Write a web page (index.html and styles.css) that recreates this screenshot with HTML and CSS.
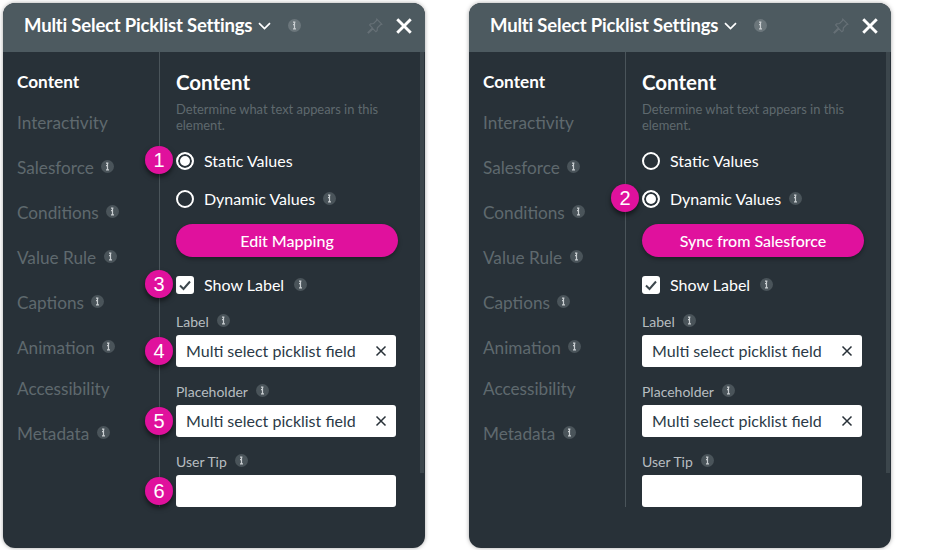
FILE: index.html
```html
<!DOCTYPE html>
<html lang="en">
<head>
<meta charset="utf-8">
<title>Multi Select Picklist Settings</title>
<link rel="stylesheet" href="styles.css">
</head>
<body>
<svg class="sprite" aria-hidden="true">
  <symbol id="i-info" viewBox="0 0 13 13"><circle cx="6.5" cy="6.5" r="6.5" fill="currentColor"/><path d="M5 3.2h2.4M6.5 3.2v6.4M5 9.8h3M5 5.6h1.5" fill="none" stroke="#c9ced1" stroke-width="1.2"/></symbol>
  <symbol id="i-x" viewBox="0 0 12 12"><path d="M1.5 1.5l9 9M10.5 1.5l-9 9" fill="none" stroke="currentColor"/></symbol>
  <symbol id="i-chev" viewBox="0 0 13 8"><path d="M1 1.2l5.5 5.3L12 1.2" fill="none" stroke="currentColor" stroke-width="1.7"/></symbol>
  <symbol id="i-pin" viewBox="0 0 16 16"><path d="M9.8 1.2l5 5-1.4.6-3 3-.3 3-1.2 1-2.9-2.9L1.6 15l-.6-.6L5.4 9.9 2.600 7l1-1.200 3-.3 3-3z" fill="none" stroke="currentColor" stroke-width="1.200"/></symbol>
</svg>
<main class="stage">

<section class="panel">
  <header class="head">
    <h1 class="title">Multi Select Picklist Settings</h1>
    <svg class="chev"><use href="#i-chev"/></svg>
    <svg class="info info-head"><use href="#i-info"/></svg>
    <svg class="pin"><use href="#i-pin"/></svg>
    <svg class="close"><use href="#i-x"/></svg>
  </header>
  <div class="body">
    <nav class="nav">
      <a class="nav-item active">Content</a>
      <a class="nav-item tight">Interactivity</a>
      <a class="nav-item">Salesforce<svg class="info"><use href="#i-info"/></svg></a>
      <a class="nav-item">Conditions<svg class="info"><use href="#i-info"/></svg></a>
      <a class="nav-item">Value Rule<svg class="info"><use href="#i-info"/></svg></a>
      <a class="nav-item">Captions<svg class="info"><use href="#i-info"/></svg></a>
      <a class="nav-item">Animation<svg class="info"><use href="#i-info"/></svg></a>
      <a class="nav-item tight">Accessibility</a>
      <a class="nav-item">Metadata<svg class="info"><use href="#i-info"/></svg></a>
    </nav>
    <div class="content">
      <h2 class="heading">Content</h2>
      <p class="desc">Determine what text appears in this element.</p>
      <div class="option first"><span class="badge">1</span><span class="radio on"></span>Static Values</div>
      <div class="option second"><span class="radio"></span>Dynamic Values<svg class="info"><use href="#i-info"/></svg></div>
      <button class="action">Edit Mapping</button>
      <div class="option check-row"><span class="badge">3</span><span class="check"><svg viewBox="0 0 18 18"><path d="M4 9.500l3.500 3.500L14 5.500" fill="none" stroke="#3d474d" stroke-width="2"/></svg></span>Show Label<svg class="info wide"><use href="#i-info"/></svg></div>
      <div class="label first-label">Label<svg class="info"><use href="#i-info"/></svg></div>
      <div class="field"><span class="badge">4</span>Multi select picklist field<svg class="clear"><use href="#i-x"/></svg></div>
      <div class="label">Placeholder<svg class="info"><use href="#i-info"/></svg></div>
      <div class="field"><span class="badge">5</span>Multi select picklist field<svg class="clear"><use href="#i-x"/></svg></div>
      <div class="label">User Tip<svg class="info"><use href="#i-info"/></svg></div>
      <div class="field"><span class="badge">6</span></div>
    </div>
    <div class="scrollbar"></div>
  </div>
</section>

<section class="panel">
  <header class="head">
    <h1 class="title">Multi Select Picklist Settings</h1>
    <svg class="chev"><use href="#i-chev"/></svg>
    <svg class="info info-head"><use href="#i-info"/></svg>
    <svg class="pin"><use href="#i-pin"/></svg>
    <svg class="close"><use href="#i-x"/></svg>
  </header>
  <div class="body">
    <nav class="nav">
      <a class="nav-item active">Content</a>
      <a class="nav-item tight">Interactivity</a>
      <a class="nav-item">Salesforce<svg class="info"><use href="#i-info"/></svg></a>
      <a class="nav-item">Conditions<svg class="info"><use href="#i-info"/></svg></a>
      <a class="nav-item">Value Rule<svg class="info"><use href="#i-info"/></svg></a>
      <a class="nav-item">Captions<svg class="info"><use href="#i-info"/></svg></a>
      <a class="nav-item">Animation<svg class="info"><use href="#i-info"/></svg></a>
      <a class="nav-item tight">Accessibility</a>
      <a class="nav-item">Metadata<svg class="info"><use href="#i-info"/></svg></a>
    </nav>
    <div class="content">
      <h2 class="heading">Content</h2>
      <p class="desc">Determine what text appears in this element.</p>
      <div class="option first"><span class="radio"></span>Static Values</div>
      <div class="option second"><span class="badge">2</span><span class="radio on"></span>Dynamic Values<svg class="info"><use href="#i-info"/></svg></div>
      <button class="action">Sync from Salesforce</button>
      <div class="option check-row"><span class="check"><svg viewBox="0 0 18 18"><path d="M4 9.500l3.500 3.500L14 5.500" fill="none" stroke="#3d474d" stroke-width="2"/></svg></span>Show Label<svg class="info wide"><use href="#i-info"/></svg></div>
      <div class="label first-label">Label<svg class="info"><use href="#i-info"/></svg></div>
      <div class="field">Multi select picklist field<svg class="clear"><use href="#i-x"/></svg></div>
      <div class="label">Placeholder<svg class="info"><use href="#i-info"/></svg></div>
      <div class="field">Multi select picklist field<svg class="clear"><use href="#i-x"/></svg></div>
      <div class="label">User Tip<svg class="info"><use href="#i-info"/></svg></div>
      <div class="field"></div>
    </div>
    <div class="scrollbar"></div>
  </div>
</section>

</main>
</body>
</html>
```

FILE: styles.css
```css
* { box-sizing: border-box; }
html, body { margin: 0; height: 100%; background: #fff; overflow: hidden; }
body { font-family: Lato, "Liberation Sans", sans-serif; }
.sprite { display: none; }

.stage { display: flex; gap: 44px; padding: 3px 0 0 3px; }

.panel {
  width: 422px;
  height: 545px;
  border-radius: 12px;
  background: #283138;
  box-shadow: 0 0 4px rgba(0, 0, 0, .35);
  display: flex;
  flex-direction: column;
  overflow: hidden;
  flex: none;
}

.head {
  height: 49px;
  flex: none;
  background: #4d5a60;
  display: flex;
  align-items: center;
  padding: 0 12px 5px 21px;
  color: #fff;
}
.title { margin: 0; font-size: 18.500px; font-weight: 700; letter-spacing: -.18px; line-height: 1; white-space: nowrap; }
.chev { width: 13px; height: 8px; margin-left: 6px; margin-top: 2px; color: #fff; }
.info { width: 13px; height: 13px; color: #4a545a; margin-left: 7px; flex: none; }
.info-head { margin-left: 17px; color: #6b767b; }
.pin { width: 16px; height: 16px; margin-left: auto; margin-top: 2px; color: #667076; }
.close { width: 18px; height: 18px; margin-left: 12px; margin-top: 2px; color: #fff; stroke-width: 1.900; }

.body { flex: 1; display: flex; position: relative; min-height: 0; }

.nav {
  width: 156px;
  flex: none;
  padding: 15px 0 0 14px;
  display: flex;
  flex-direction: column;
}
.nav-item {
  height: 28px;
  margin-top: 17px;
  display: flex;
  align-items: center;
  font-size: 17.200px;
  color: #5f696e;
}
.nav-item .info { margin-left: 7.500px; margin-top: -1px; }
.nav-item.tight { margin-top: 13px; }
.nav-item.active { margin-top: 0; color: #fff; font-size: 17.200px; font-weight: 700; }

.content {
  width: 238px;
  height: 455px;
  flex: none;
  border-left: 1px solid #4a545a;
  padding: 16px 0 0 16px;
  color: #fff;
}
.heading { margin: 0; font-size: 20.500px; font-weight: 700; line-height: 28px; }
.desc { margin: 5px 0 0; width: 225px; font-size: 12.900px; line-height: 16px; color: #5f696e; }

.option {
  position: relative;
  display: flex;
  align-items: center;
  height: 22px;
  padding-bottom: 2px;
  font-size: 16px;
  color: #fff;
}
.option.first { margin-top: 17px; }
.option.second { margin-top: 16px; }
.option .info { margin-left: 8px; margin-top: 0; }
.option .info.wide { margin-left: 10px; }
.radio {
  width: 18px;
  height: 18px;
  border: 2px solid #fff;
  border-radius: 50%;
  margin-right: 10px;
  margin-top: 1px;
  flex: none;
}
.radio.on { background: #fff; box-shadow: inset 0 0 0 2px #283138; }
.check {
  width: 18px;
  height: 18px;
  border-radius: 3px;
  background: #fff;
  margin-right: 10px;
  margin-top: 2px;
  flex: none;
}
.check svg { display: block; width: 18px; height: 18px; }

.action {
  display: block;
  width: 222px;
  height: 33px;
  margin-top: 14px;
  border: 0;
  border-radius: 17px;
  background: #e0119d;
  color: #fff;
  font: 500 16px Lato, "Liberation Sans", sans-serif;
  box-shadow: 0 2px 4px rgba(0, 0, 0, .35);
}
.option.check-row { margin-top: 17px; }

.label {
  display: flex;
  align-items: center;
  height: 18px;
  margin-top: 16px;
  padding-bottom: 2px;
  font-size: 14px;
  color: #b7bdc0;
}
.label .info { margin-left: 8.500px; margin-top: -2px; }
.label.first-label { margin-top: 17px; }

.field {
  position: relative;
  display: flex;
  align-items: center;
  width: 220px;
  height: 32px;
  margin-top: 4px;
  padding: 0 0 2px 10px;
  border-radius: 3px;
  background: #fff;
  font-size: 16px;
  color: #2b3a46;
}
.clear { width: 12px; height: 12px; margin: 2px 9px 0 auto; color: #283138; stroke-width: 1.500; }

.badge {
  position: absolute;
  left: -31px;
  top: 50%;
  width: 28px;
  height: 28px;
  margin-top: -14px;
  border-radius: 50%;
  background: #e0119d;
  color: #fff;
  font: 20px/28px "Liberation Sans", sans-serif;
  text-align: center;
  box-shadow: 0 3px 5px rgba(0, 0, 0, .55);
}
.option .badge { margin-top: -15px; }

.scrollbar {
  position: absolute;
  top: 0;
  right: 1px;
  width: 4px;
  height: 421px;
  background: #3c464c;
}
```
